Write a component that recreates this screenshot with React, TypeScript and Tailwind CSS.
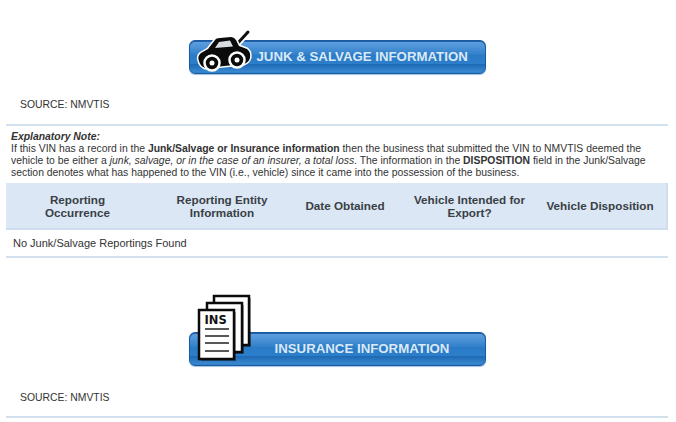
import type { ReactNode } from 'react';

// Report sections: junk & salvage, then insurance

function CarIcon() {
  return (
    <svg width="66" height="52" viewBox="0 0 66 52" className="absolute left-[1px] top-[-14px]">
      <path d="M46 17 L57 5" fill="none" stroke="#fff" strokeWidth="6.5" strokeLinecap="round" />
      <path d="M46 17 L57 5" fill="none" stroke="#111" strokeWidth="3" strokeLinecap="round" />
      <path
        d="M8 34 Q6 29 10 26 L17 22 L24 13 Q25 11 29 11 L40 10 Q43 10 45 13 L48 19 L56 22 Q60 25 59 31 Q58 35 53 37 L14 41 Q9 39 8 34 Z"
        fill="#0b0b0b"
        stroke="#fff"
        strokeWidth="3"
        strokeLinejoin="round"
        paintOrder="stroke"
      />
      <path d="M24 21 L28 15 L39 13.5 L42 19.5 Z" fill="#d9dde2" />
      <circle cx="21" cy="36" r="7.5" fill="#0b0b0b" stroke="#fff" strokeWidth="2.5" />
      <circle cx="21" cy="36" r="2.5" fill="#fff" />
      <circle cx="46" cy="33" r="7.5" fill="#0b0b0b" stroke="#fff" strokeWidth="2.5" />
      <circle cx="46" cy="33" r="2.5" fill="#fff" />
    </svg>
  );
}

function Sheet({ x, y }: { x: number; y: number }) {
  return (
    <g>
      <rect x={x + 2} y={y + 2} width="35" height="49" fill="#000" opacity="0.35" />
      <rect x={x} y={y} width="35" height="49" fill="#fff" stroke="#0b0b0b" strokeWidth="2.5" />
    </g>
  );
}

function DocsIcon() {
  return (
    <svg width="66" height="76" viewBox="0 0 66 76" className="absolute left-[3px] top-[-39px]">
      <Sheet x={21} y={2} />
      <Sheet x={14} y={9} />
      <Sheet x={6} y={16} />
      <text x="11.5" y="30" fontFamily="'DejaVu Sans', sans-serif" fontWeight="700" fontSize="11.5" fill="#111">
        INS
      </text>
      <path d="M12 35 H36 M12 42 H36 M12 49 H36 M12 57 H36" stroke="#222" strokeWidth="1.6" />
    </svg>
  );
}

function Banner({ icon, title, textClass }: { icon: ReactNode; title: string; textClass: string }) {
  return (
    <div className="relative mx-auto h-[34px] w-[297px] rounded-[6px] border border-[#1d5a9e] bg-gradient-to-b from-[#1f5fa8] via-[#2b7cc8] to-[#2f82cc] shadow-[0_1px_1px_#9fc2e4]">
      <div className="absolute inset-x-0 top-[1px] h-[13px] rounded-t-[5px] bg-gradient-to-b from-[#5d9fde] to-[#2f7fca]" />
      <div className="absolute inset-x-0 bottom-[1px] h-[8px] rounded-b-[5px] bg-gradient-to-b from-[#1c68b4] to-[#3a89d0]" />
      <p className={`absolute top-0 flex h-full items-center whitespace-nowrap font-['Liberation_Sans',sans-serif] text-[13.25px] font-bold text-[#dbe9f6] ${textClass}`}>
        {title}
      </p>
      {icon}
    </div>
  );
}

const headers = [
  'Reporting Occurrence',
  'Reporting Entity Information',
  'Date Obtained',
  'Vehicle Intended for Export?',
  'Vehicle Disposition',
];

export default function App() {
  return (
    <div className="h-[422px] w-[676px] overflow-hidden bg-white pl-[6px] pr-[8px] pt-[40px] font-['Liberation_Sans',Arial,sans-serif] text-[#333]">
      <Banner icon={<CarIcon />} title="JUNK & SALVAGE INFORMATION" textClass="left-[67px]" />

      <p className="mt-[24px] border-b-2 border-[#d3e0ee] pb-[13px] pl-[14px] text-[10.4px] leading-[13px]">SOURCE: NMVTIS</p>

      <div className="mt-[5px] pl-[5px] text-[10.4px] leading-[12px]">
        <p className="font-bold italic">Explanatory Note:</p>
        <p>
          If this VIN has a record in the <b>Junk/Salvage or Insurance information</b> then the business that submitted the VIN to NMVTIS deemed the
          <br />
          vehicle to be either a <i>junk, salvage, or in the case of an insurer, a total loss</i>. The information in the <b>DISPOSITION</b> field in the Junk/Salvage
          <br />
          section denotes what has happened to the VIN (i.e., vehicle) since it came into the possession of the business.
        </p>
      </div>

      <div className="mt-[4px] grid h-[47px] grid-cols-[143px_146px_100px_149px_112px] items-center border-b-2 border-r-2 border-[#cfdeee] bg-[#dbe7f4] text-center text-[11.7px] font-bold leading-[13px] text-[#3a3f46]">
        {headers.map((h) => (
          <div key={h} className="first:px-[30px] [&:nth-child(2)]:px-[4px] [&:nth-child(4)]:px-[4px]">
            {h}
          </div>
        ))}
      </div>

      <p className="border-b-2 border-[#d3e0ee] pb-[6px] pl-[7px] pt-[6px] text-[11px] leading-[14px]">No Junk/Salvage Reportings Found</p>

      <div className="mt-[74px]">
        <Banner icon={<DocsIcon />} title="INSURANCE INFORMATION" textClass="left-[85px]" />
      </div>

      <p className="mt-[25px] border-b-2 border-[#d3e0ee] pb-[12px] pl-[14px] text-[10.4px] leading-[13px]">SOURCE: NMVTIS</p>
    </div>
  );
}
